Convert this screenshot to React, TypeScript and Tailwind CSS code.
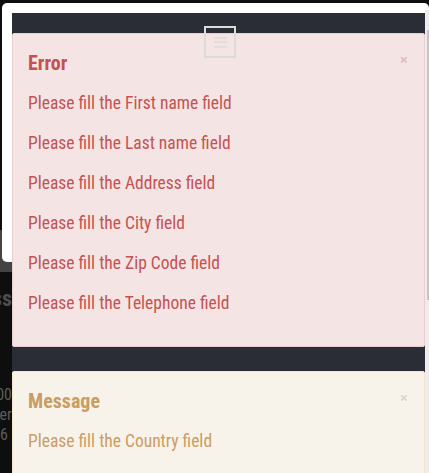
const font = { fontFamily: "'Roboto Condensed', 'Liberation Sans', sans-serif" };

function HamburgerIcon() {
  return (
    <div className="absolute left-[192px] top-[13px] z-10 flex h-[32px] w-[32px] flex-col items-center justify-center gap-[2.5px] border-2 border-[#dcdcdc]">
      <span className="block h-[2px] w-[13px] bg-[#e2dcdc]" />
      <span className="block h-[2px] w-[13px] bg-[#e2dcdc]" />
      <span className="block h-[2px] w-[13px] bg-[#e2dcdc]" />
    </div>
  );
}

function Alert({
  title,
  lines,
  variant,
}: {
  title: string;
  lines: string[];
  variant: "error" | "message";
}) {
  const isErr = variant === "error";
  return (
    <div
      className={
        isErr
          ? "relative flex flex-col rounded-[2px] border border-[#ebcccf] bg-[#f5e4e4] pl-[15px] pt-[9px] pb-[23px] text-[#c45252]"
          : "relative flex flex-col rounded-[2px] border border-[#f3e6cf] bg-[#f8f3ea] pl-[15px] pt-[9px] pb-[23px] text-[#c99d63]"
      }
    >
      <span
        className={
          isErr
            ? "absolute right-[16px] top-[18px] text-[15px] font-bold leading-none text-[#dcbcc0]"
            : "absolute right-[16px] top-[18px] text-[15px] font-bold leading-none text-[#ddd6cb]"
        }
      >
        ×
      </span>
      <div className="flex h-[40px] items-center text-[20px] font-bold" style={font}>
        {title}
      </div>
      {lines.map((l) => (
        <div key={l} className="flex h-[40px] items-center text-[17.5px]" style={font}>
          {l}
        </div>
      ))}
    </div>
  );
}

export default function App() {
  return (
    <div className="grid h-[473px] w-[429px] overflow-hidden bg-[#0e0e0e]">
      {/* gray band behind the white box on the left */}
      <div className="mt-[230px] h-[42px] w-[12px] self-start bg-[#434343] [grid-area:1/1]" />
      {/* page behind the panel */}
      <div className="flex flex-col [grid-area:1/1]">
        <div className="h-[3px] shrink-0" />
        <div className="ml-[2px] h-[259px] shrink-0 rounded-[5px] bg-white" />
        <div className="flex w-[12px] flex-col items-end overflow-hidden" style={font}>
          <div className="mt-[24px] whitespace-nowrap text-[22px] font-bold leading-[26px] text-[#4d4d4d]">
            Address
          </div>
          <div className="mt-[73px] flex flex-col items-end text-[16px] leading-[20px] text-[#5c5c5c]">
            <span className="whitespace-nowrap">1200</span>
            <span className="whitespace-nowrap">Center</span>
            <span className="whitespace-nowrap pr-[4px]">56</span>
          </div>
        </div>
      </div>
      {/* scrollbar */}
      <div className="flex justify-end [grid-area:1/1]">
        <div className="mt-[10px] flex w-[4px] justify-end bg-[#ededed]">
          <div className="mt-[20px] h-[270px] w-[2px] bg-[#c4c4c4]" />
        </div>
      </div>

      {/* main panel */}
      <div className="relative z-10 ml-[12px] mt-[13px] flex h-[460px] w-[413px] flex-col gap-[24px] bg-[#2a2d35] pt-[20px] [grid-area:1/1]">
        <HamburgerIcon />
        <Alert
          variant="error"
          title="Error"
          lines={[
            "Please fill the First name field",
            "Please fill the Last name field",
            "Please fill the Address field",
            "Please fill the City field",
            "Please fill the Zip Code field",
            "Please fill the Telephone field",
          ]}
        />
        <Alert variant="message" title="Message" lines={["Please fill the Country field"]} />
      </div>
    </div>
  );
}
